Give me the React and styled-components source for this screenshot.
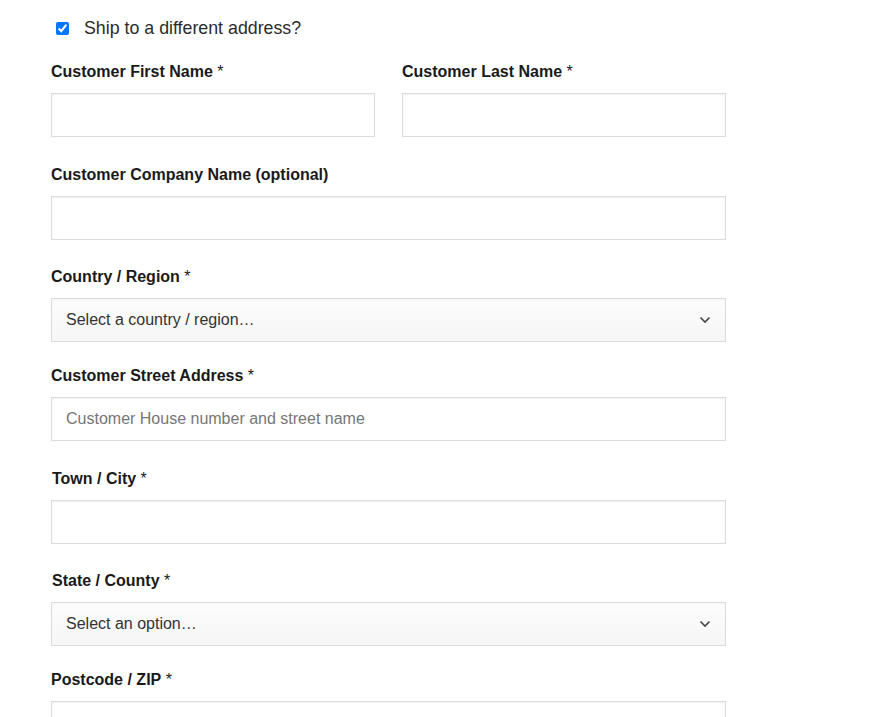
import React from "react";
import styled, { createGlobalStyle } from "styled-components";

const Global = createGlobalStyle`
  html, body { margin: 0; padding: 0; background: #fff; }
  body { font-family: "Liberation Sans", Arial, sans-serif; color: #1e1e1e; }
  * { box-sizing: border-box; }
`;

const Form = styled.form`
  width: 675px;
  margin-left: 51px;
  padding-top: 16px;
  display: flex;
  flex-direction: column;
`;

const CheckRow = styled.label`
  display: flex;
  align-items: center;
  height: 24px;
  margin-bottom: 20px;
  font-size: 17.8px;
  color: #2b2b2b;
  cursor: pointer;
`;

const Check = styled.input`
  width: 13px;
  height: 13px;
  margin: 0 15px 0 5px;
  accent-color: #0075ff;
`;

const Row = styled.div`
  display: grid;
  grid-template-columns: 1fr 1fr;
  column-gap: 27px;
`;

const Field = styled.div`
  display: flex;
  flex-direction: column;
  margin-bottom: ${(p) => (p.$tight ? "22px" : "25.5px")};
`;

const Label = styled.label`
  font-size: 16px;
  font-weight: 700;
  line-height: 24px;
  margin-bottom: 9px;
  color: #1a1a1a;
  padding-left: ${(p) => (p.$nudge ? "1px" : "0")};
`;

const Req = styled.span`
  font-weight: 400;
  color: #1a1a1a;
`;

const TextInput = styled.input`
  height: 44px;
  width: 100%;
  border: 1px solid #dcdcdc;
  box-shadow: inset 0 1px 2px rgba(0, 0, 0, 0.06);
  background: #fff;
  padding: 0 14px;
  font-family: "Liberation Sans", Arial, sans-serif;
  font-size: 16px;
  color: #333;
  outline: none;
  &::placeholder { color: #767676; }
`;

const SelectBox = styled.div`
  height: 44px;
  width: 100%;
  border: 1px solid #dcdcdc;
  background: linear-gradient(#fcfcfc, #f6f6f6);
  box-shadow: inset 0 1px 2px rgba(0, 0, 0, 0.03);
  padding: 0 14px;
  display: flex;
  align-items: center;
  justify-content: space-between;
  font-size: 16px;
  color: #333;
  cursor: pointer;
`;

const Chevron = () => (
  <svg width="12" height="8" viewBox="0 0 12 8">
    <path d="M1.5 1.5 L6 6 L10.5 1.5" fill="none" stroke="#444" strokeWidth="1.6" />
  </svg>
);

const Req_ = () => <Req> *</Req>;

export default function App() {
  return (
    <>
      <Global />
      <Form>
        <CheckRow>
          <Check type="checkbox" defaultChecked />
          Ship to a different address?
        </CheckRow>
        <Row>
          <Field>
            <Label>Customer First Name<Req_ /></Label>
            <TextInput type="text" />
          </Field>
          <Field>
            <Label>Customer Last Name<Req_ /></Label>
            <TextInput type="text" />
          </Field>
        </Row>
        <Field>
          <Label>Customer Company Name (optional)</Label>
          <TextInput type="text" />
        </Field>
        <Field $tight>
          <Label>Country / Region<Req_ /></Label>
          <SelectBox>
            <span>Select a country / region…</span>
            <Chevron />
          </SelectBox>
        </Field>
        <Field>
          <Label>Customer Street Address<Req_ /></Label>
          <TextInput type="text" placeholder="Customer House number and street name" />
        </Field>
        <Field>
          <Label $nudge>Town / City<Req_ /></Label>
          <TextInput type="text" />
        </Field>
        <Field $tight>
          <Label $nudge>State / County<Req_ /></Label>
          <SelectBox>
            <span>Select an option…</span>
            <Chevron />
          </SelectBox>
        </Field>
        <Field>
          <Label>Postcode / ZIP<Req_ /></Label>
          <TextInput type="text" />
        </Field>
      </Form>
    </>
  );
}
